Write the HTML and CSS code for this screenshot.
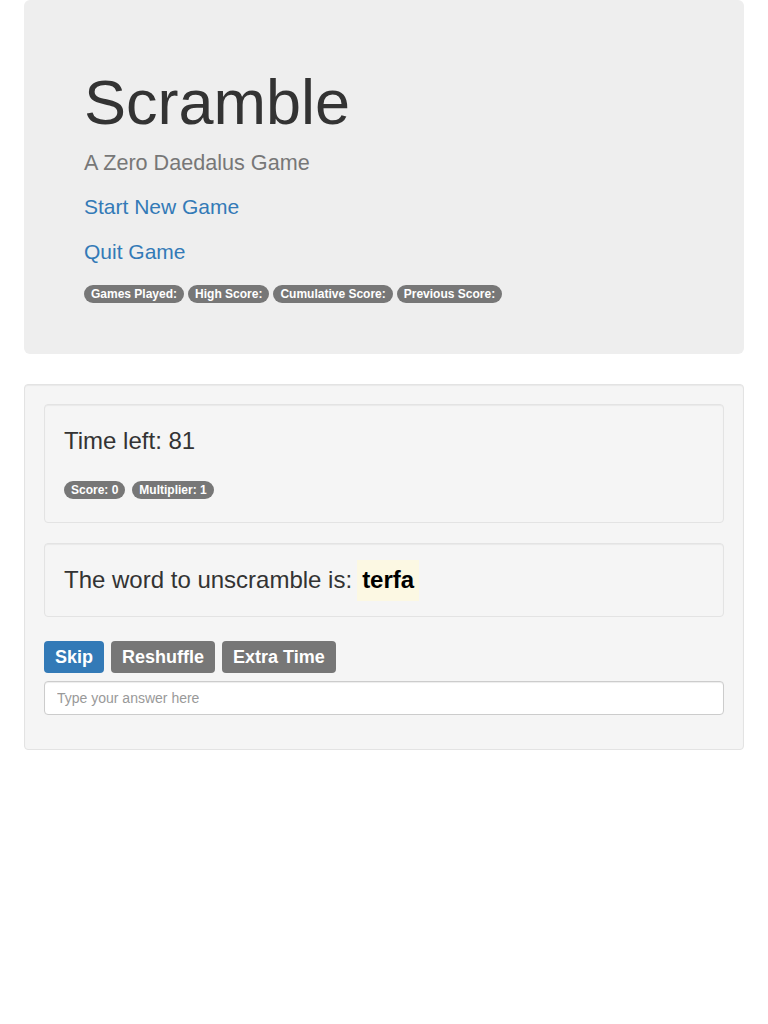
FILE: index.html
```html
<!DOCTYPE html>
<html>
<head>
<meta charset="utf-8">
<title>Scramble</title>
<link rel="stylesheet" href="styles.css">
</head>
<body>
<div class="container">
  <div class="jumbotron">
    <h1 class="title">Scramble</h1>
    <p class="subtitle">A Zero Daedalus Game</p>
    <p class="link-row"><a href="#">Start New Game</a></p>
    <p class="link-row"><a href="#">Quit Game</a></p>
    <div class="badge-row">
      <span class="badge">Games Played:</span>
      <span class="badge">High Score:</span>
      <span class="badge">Cumulative Score:</span>
      <span class="badge">Previous Score:</span>
    </div>
  </div>

  <div class="well">
    <div class="well inner">
      <h3 class="timer">Time left: 81</h3>
      <div class="badge-row small">
        <span class="badge">Score: 0</span>
        <span class="badge">Multiplier: 1</span>
      </div>
    </div>
    <div class="well inner">
      <h3 class="word">The word to unscramble is: <mark class="scrambled">terfa</mark></h3>
    </div>
    <div class="actions">
      <button class="act primary">Skip</button>
      <button class="act">Reshuffle</button>
      <button class="act">Extra Time</button>
    </div>
    <div class="form-group">
      <input class="form-control" type="text" placeholder="Type your answer here">
    </div>
  </div>
</div>
</body>
</html>
```

FILE: styles.css
```css
* { box-sizing: border-box; }
html, body { margin: 0; padding: 0; background: #fff; }
body {
  font-family: "Liberation Sans", Arial, sans-serif;
  font-size: 14px;
  line-height: 1.42857;
  color: #333;
}
.container {
  width: 750px;
  margin: 0 auto;
  padding: 0 15px;
}
.jumbotron {
  background: #eee;
  border-radius: 6px;
  padding: 48px 60px 48px;
  margin-bottom: 30px;
}
.title {
  font-size: 63px;
  font-weight: 500;
  line-height: 1.1;
  margin: 20px 0 10px;
  color: #333;
}
.subtitle {
  font-size: 21.6px;
  line-height: 31px;
  color: #777;
  margin: 0 0 14px;
}
.link-row {
  font-size: 21px;
  margin: 0 0 15px;
}
.link-row a {
  color: #337ab7;
  text-decoration: none;
}
.badge-row {
  display: flex;
  gap: 4px;
  height: 24px;
  align-items: center;
}
.badge {
  display: inline-block;
  padding: 3px 7px;
  font-size: 12px;
  font-weight: bold;
  line-height: 1;
  color: #fff;
  background: #777;
  border-radius: 10px;
  white-space: nowrap;
}
.well {
  background: #f5f5f5;
  border: 1px solid #e3e3e3;
  border-radius: 4px;
  padding: 19px;
  margin-bottom: 20px;
  box-shadow: inset 0 1px 1px rgba(0,0,0,.05);
}
.well.inner { margin-bottom: 20px; }
.timer {
  font-size: 24px;
  font-weight: 500;
  line-height: 1.1;
  margin: 4px 0 25px;
}
.badge-row.small {
  height: 20px;
  gap: 7px;
  margin-bottom: 3px;
}
.word {
  font-size: 24px;
  font-weight: 500;
  line-height: 34px;
  height: 34px;
  margin: 0;
  display: flex;
  align-items: center;
  gap: 5px;
}
.scrambled {
  display: inline-block;
  background: #fcf8e3;
  color: #000;
  font-weight: bold;
  padding: 3px 5px 4px;
  line-height: 34px;
  margin: -3px 0 -4px;
}
.actions {
  display: flex;
  gap: 7px;
  margin: 24px 0 8px;
}
.act {
  font-family: inherit;
  font-size: 18px;
  font-weight: bold;
  line-height: 1;
  height: 32px;
  padding: 0 11px;
  border: 0;
  border-radius: 4px;
  background: #777;
  color: #fff;
}
.act.primary { background: #337ab7; }
.form-group { margin-bottom: 15px; }
.form-control {
  display: block;
  width: 100%;
  height: 34px;
  padding: 6px 12px;
  font-family: inherit;
  font-size: 14px;
  color: #555;
  background: #fff;
  border: 1px solid #ccc;
  border-radius: 4px;
  box-shadow: inset 0 1px 1px rgba(0,0,0,.075);
}
.form-control::placeholder { color: #999; }
```
